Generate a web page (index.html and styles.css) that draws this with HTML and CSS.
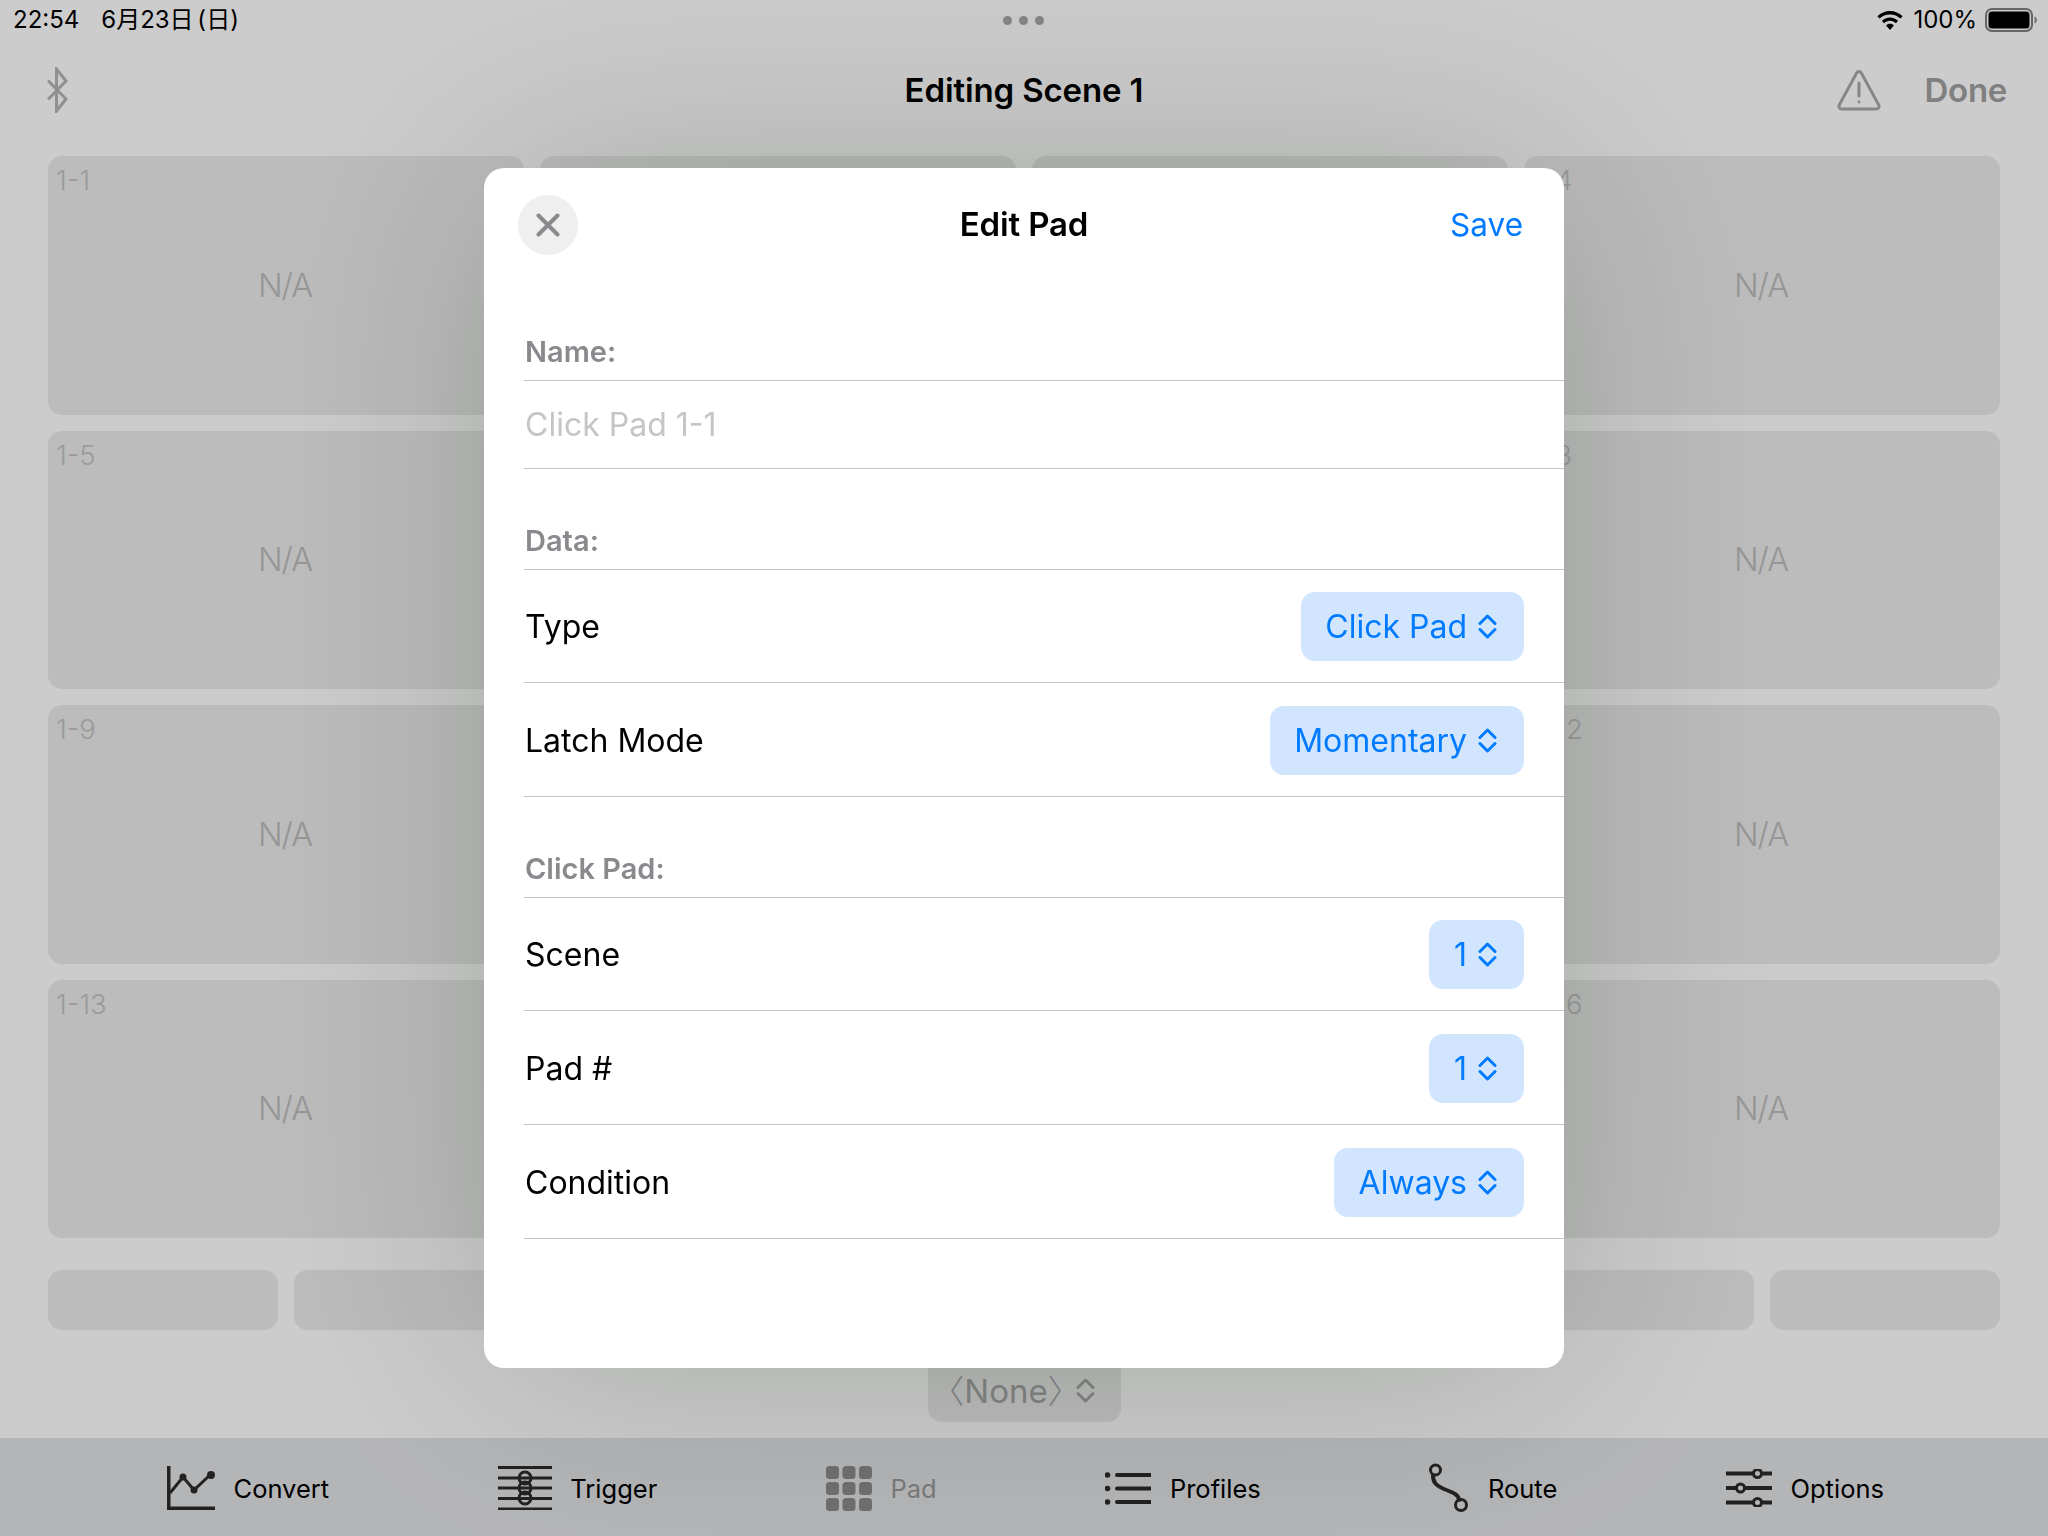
FILE: index.html
```html
<!DOCTYPE html>
<html lang="en">
<head>
<meta charset="utf-8">
<title>Editing Scene 1</title>
<link rel="stylesheet" href="styles.css">
</head>
<body>
<div class="app">
  <div class="status">
    <div class="status-left"><span>22:54</span><span class="date">6月23日 (日)</span></div>
    <div class="dots"><i></i><i></i><i></i></div>
    <div class="status-right">
      <svg class="wifi" viewBox="0 0 28 20"><path d="M14 4.200c3.900 0 7.400 1.500 10 4l2-2.200C22.800 2.900 18.600 1 14 1S5.200 2.900 2 6l2 2.200c2.600-2.500 6.100-4 10-4z"/><path d="M14 10.200c2.200 0 4.200.9 5.700 2.300l2-2.200C19.700 8.300 17 7.100 14 7.100s-5.700 1.200-7.700 3.200l2 2.200c1.500-1.400 3.500-2.300 5.700-2.300z"/><path d="M14 13.200c-1.500 0-2.800.6-3.700 1.500L14 19l3.700-4.300c-.9-.9-2.200-1.500-3.700-1.500z"/></svg>
      <span>100%</span>
      <svg class="battery" viewBox="0 0 52 24"><rect x="1" y="1" width="46" height="22" rx="6" class="batt-shell"/><rect x="3.500" y="3.500" width="41" height="17" rx="3.500"/><path class="batt-cap" d="M49.500 8.500c1.500.5 2.500 2 2.500 3.500s-1 3-2.500 3.500z"/></svg>
    </div>
  </div>

  <div class="nav">
    <div class="nav-left">
      <svg class="bt" viewBox="0 0 22 46"><path d="M2 13.500 20 32 10.500 44V2L20 14 2 32.500"/></svg>
    </div>
    <div class="nav-title">Editing Scene 1</div>
    <div class="nav-right">
      <svg class="warn" viewBox="0 0 44 42"><path d="M22 2.500c1 0 1.800.5 2.300 1.400l17.400 32c1 1.900-.2 4.100-2.300 4.100H4.600c-2.100 0-3.300-2.200-2.300-4.100l17.400-32c.5-.9 1.300-1.400 2.300-1.400z"/><path d="M22 14v13"/><circle cx="22" cy="33" r="1.400"/></svg>
      <span class="done">Done</span>
    </div>
  </div>

  <div class="pads">
    <div class="pad"><span class="pad-id">1-1</span><span class="na">N/A</span></div>
    <div class="pad"></div>
    <div class="pad"></div>
    <div class="pad"><span class="pad-id">1-4</span><span class="na">N/A</span></div>
    <div class="pad"><span class="pad-id">1-5</span><span class="na">N/A</span></div>
    <div class="pad"></div>
    <div class="pad"></div>
    <div class="pad"><span class="pad-id">1-8</span><span class="na">N/A</span></div>
    <div class="pad"><span class="pad-id">1-9</span><span class="na">N/A</span></div>
    <div class="pad"></div>
    <div class="pad"></div>
    <div class="pad"><span class="pad-id">1-12</span><span class="na">N/A</span></div>
    <div class="pad"><span class="pad-id">1-13</span><span class="na">N/A</span></div>
    <div class="pad"></div>
    <div class="pad"></div>
    <div class="pad"><span class="pad-id">1-16</span><span class="na">N/A</span></div>
  </div>

  <div class="softkeys">
    <div class="softkey"></div><div class="softkey"></div><div class="softkey"></div><div class="softkey"></div>
    <div class="softkey"></div><div class="softkey"></div><div class="softkey"></div><div class="softkey"></div>
  </div>

  <div class="selector-row">
    <div class="selector">
      <span class="sel-text"><span class="bracket bracket-open">〈</span>None<span class="bracket bracket-close">〉</span></span>
      <svg class="chev" viewBox="0 0 19 25"><path d="M2 9.500 9.500 2 17 9.500M2 15.500 9.500 23 17 15.500"/></svg>
    </div>
  </div>

  <div class="tabbar">
    <div class="tab">
      <svg class="ico" width="48" height="44" viewBox="0 0 48 44"><path class="th" d="M1.500 0v42.500H47"/><path class="tn" d="M3 27 16 11 27 24 44 8"/><circle cx="16" cy="11" r="3.500"/><circle cx="27" cy="24" r="3.500"/><circle cx="44" cy="9" r="4"/></svg>
      <span>Convert</span>
    </div>
    <div class="tab">
      <svg class="ico" width="54" height="44" viewBox="0 0 54 44"><path class="tn" d="M0 1.500h54M0 12h54M0 22h54M0 32.500h54M0 43h54"/><circle class="ring" cx="27" cy="12" r="6"/><circle class="ring" cx="27" cy="22" r="6"/><circle class="ring" cx="27" cy="32" r="6"/></svg>
      <span>Trigger</span>
    </div>
    <div class="tab tab-off">
      <svg class="ico" width="46" height="45" viewBox="0 0 46 45"><rect x="0" y="0" width="13" height="13" rx="3.500"/><rect x="16.500" y="0" width="13" height="13" rx="3.500"/><rect x="33" y="0" width="13" height="13" rx="3.500"/><rect x="0" y="16" width="13" height="13" rx="3.500"/><rect x="16.500" y="16" width="13" height="13" rx="3.500"/><rect x="33" y="16" width="13" height="13" rx="3.500"/><rect x="0" y="32" width="13" height="13" rx="3.500"/><rect x="16.500" y="32" width="13" height="13" rx="3.500"/><rect x="33" y="32" width="13" height="13" rx="3.500"/></svg>
      <span>Pad</span>
    </div>
    <div class="tab">
      <svg class="ico" width="46" height="33" viewBox="0 0 46 33"><circle cx="2.500" cy="3" r="2.800"/><circle cx="2.500" cy="16.500" r="2.800"/><circle cx="2.500" cy="30" r="2.800"/><path class="th" d="M12 3h34M12 16.500h34M12 30h34"/></svg>
      <span>Profiles</span>
    </div>
    <div class="tab">
      <svg class="ico" width="40" height="50" viewBox="0 0 40 50"><circle class="ring" cx="6.500" cy="7" r="5"/><circle class="ring" cx="32" cy="42" r="5.500"/><path class="th" d="M4 12.500c0 7 3 10 11 13.500 10 4 15 6 15 11"/></svg>
      <span>Route</span>
    </div>
    <div class="tab">
      <svg class="ico" width="46" height="38" viewBox="0 0 46 38"><path class="th" d="M0 4.500h27M36 4.500h10M0 19h10M19 19h27M0 33.500h27M36 33.500h10"/><circle class="ring" cx="31.500" cy="4.500" r="4"/><circle class="ring" cx="14.500" cy="19" r="4"/><circle class="ring" cx="31.500" cy="33.500" r="4"/></svg>
      <span>Options</span>
    </div>
  </div>
</div>

<div class="scrim">
  <div class="modal">
    <div class="modal-head">
      <div class="close">
        <svg class="close-x" viewBox="0 0 24 24"><path d="M2.500 2.500l19 19M21.500 2.500l-19 19"/></svg>
      </div>
      <div class="modal-title">Edit Pad</div>
      <div class="save">Save</div>
    </div>
    <div class="form">
      <div class="sec-head sec-first">Name:</div>
      <div class="field">Click Pad 1-1</div>
      <div class="sec-head">Data:</div>
      <div class="row row-first">
        <span>Type</span>
        <div class="pick"><span>Click Pad</span><svg class="chev" viewBox="0 0 19 25"><path d="M2 9.500 9.500 2 17 9.500M2 15.500 9.500 23 17 15.500"/></svg></div>
      </div>
      <div class="row">
        <span>Latch Mode</span>
        <div class="pick"><span>Momentary</span><svg class="chev" viewBox="0 0 19 25"><path d="M2 9.500 9.500 2 17 9.500M2 15.500 9.500 23 17 15.500"/></svg></div>
      </div>
      <div class="sec-head">Click Pad:</div>
      <div class="row row-first">
        <span>Scene</span>
        <div class="pick"><span>1</span><svg class="chev" viewBox="0 0 19 25"><path d="M2 9.500 9.500 2 17 9.500M2 15.500 9.500 23 17 15.500"/></svg></div>
      </div>
      <div class="row">
        <span>Pad #</span>
        <div class="pick"><span>1</span><svg class="chev" viewBox="0 0 19 25"><path d="M2 9.500 9.500 2 17 9.500M2 15.500 9.500 23 17 15.500"/></svg></div>
      </div>
      <div class="row">
        <span>Condition</span>
        <div class="pick"><span>Always</span><svg class="chev" viewBox="0 0 19 25"><path d="M2 9.500 9.500 2 17 9.500M2 15.500 9.500 23 17 15.500"/></svg></div>
      </div>
    </div>
  </div>
</div>
</body>
</html>
```

FILE: styles.css
```css
* { box-sizing: border-box; }
html, body { margin: 0; height: 100%; }
body {
  width: 2048px;
  height: 1536px;
  overflow: hidden;
  background: #fff;
  color: #000;
  font-family: Inter, "Noto Sans CJK JP", "Noto Sans", sans-serif;
}
.app { width: 2048px; height: 1536px; display: flex; flex-direction: column; }

.status {
  height: 40px;
  padding: 0 12px;
  display: grid;
  grid-template-columns: 1fr auto 1fr;
  align-items: center;
  font-size: 24px;
  line-height: 28px;
}
.status-left { display: flex; align-items: baseline; gap: 22px; padding-left: 1px; }
.date { word-spacing: -3px; font-size: 24px; }
.status-right { display: flex; justify-content: flex-end; align-items: center; gap: 8px; margin-right: -1px; }
.dots { display: flex; gap: 7px; margin-left: -2px; }
.dots i { width: 9px; height: 9px; border-radius: 50%; background: #a8a8a8; }
.wifi { width: 30px; height: 21px; fill: #000; }
.battery { width: 52px; height: 24px; fill: #000; }
.batt-shell { fill: none; stroke: #7f7f7f; stroke-width: 2; }
.batt-cap { fill: #8f8f8f; }

.nav {
  height: 100px;
  padding: 0 41px;
  display: grid;
  grid-template-columns: 1fr auto 1fr;
  align-items: center;
}
.nav-left { display: flex; align-items: center; padding-left: 5px; }
.bt { width: 22px; height: 46px; fill: none; stroke: #b4b4b4; stroke-width: 3; stroke-linejoin: miter; }
.nav-title { font-size: 33px; font-weight: 600; letter-spacing: -0.13px; }
.nav-right { display: flex; justify-content: flex-end; align-items: center; gap: 44px; }
.warn { width: 44px; height: 42px; fill: none; stroke: #a8a8a8; stroke-width: 3; stroke-linecap: round; }
.warn circle { fill: #a8a8a8; stroke: none; }
.done { font-size: 33px; font-weight: 600; color: #a0a0a0; letter-spacing: -0.3px; }

.pads {
  height: 1082px;
  margin-top: 16px;
  padding: 0 48px;
  display: grid;
  grid-template-columns: repeat(4, 1fr);
  grid-template-rows: repeat(4, 1fr);
  gap: 16px;
}
.pad {
  position: relative;
  background: #ebebeb;
  border-radius: 14px;
  display: flex;
  align-items: center;
  justify-content: center;
  font-size: 32.500px;
  font-weight: 300;
  letter-spacing: -1px;
  color: #bcbcbc;
}
.na { padding-right: 2px; }
.pad-id {
  position: absolute;
  left: 8px;
  top: 7px;
  font-size: 27.500px;
  font-weight: 300;
  letter-spacing: 0;
  color: #c2c2c2;
}

.softkeys {
  margin-top: 32px;
  padding: 0 48px;
  display: grid;
  grid-template-columns: repeat(8, 1fr);
  gap: 16px;
}
.softkey { height: 60px; background: #ebebeb; border-radius: 14px; }

.selector-row { margin-top: 23px; display: flex; justify-content: center; }
.selector {
  width: 193px;
  height: 69px;
  padding: 6px 5px 0 0;
  background: #ebebeb;
  border-radius: 14px;
  display: flex;
  align-items: center;
  justify-content: center;
  gap: 15px;
  font-size: 33px;
  color: #a6a6a6;
}
.bracket { font-family: "Noto Sans CJK JP", sans-serif; font-weight: 300; line-height: 0; }
.bracket-open { margin-left: -17px; }
.bracket-close { margin-right: -20px; }
.selector .chev { stroke: #a6a6a6; }

.tabbar {
  margin-top: 16px;
  flex: 1;
  background: #e2e3e5;
  display: flex;
  justify-content: space-between;
  align-items: center;
  padding: 2px 164px 0 167px;
  font-size: 25.500px;
}
.tab { display: flex; align-items: center; gap: 18.500px; }
.ico { display: block; fill: #2b2b2b; }
.th, .tn, .ring { fill: none; stroke: #2b2b2b; }
.th { stroke-width: 4; stroke-linecap: round; }
.tn { stroke-width: 3; }
.ring { stroke-width: 3; }
.tab-off { color: #999; }
.tab-off .ico { fill: #8c8c8c; }

.scrim {
  position: fixed;
  inset: 0;
  background: rgba(0, 0, 0, 0.2);
  display: flex;
  align-items: center;
  justify-content: center;
}
.modal {
  width: 1080px;
  height: 1200px;
  background: #fff;
  border-radius: 20px;
  box-shadow: 0 0 240px rgba(0, 24, 0, 0.2);
}
.modal-head {
  padding: 26px 41px 0;
  height: 87px;
  display: grid;
  grid-template-columns: 1fr auto 1fr;
  align-items: center;
}
.close {
  width: 60px;
  height: 60px;
  margin-left: -7px;
  margin-top: 1px;
  border-radius: 50%;
  background: #efefef;
  display: flex;
  align-items: center;
  justify-content: center;
}
.close-x { width: 24px; height: 24px; fill: none; stroke: #8a8a8e; stroke-width: 4; stroke-linecap: round; }
.modal-title { font-size: 33px; font-weight: 600; letter-spacing: -0.13px; margin-top: -1px; }
.save { justify-self: end; font-size: 31.500px; color: #007aff; margin-top: -1px; }

.form { padding-left: 40px; font-size: 32px; }
.sec-head {
  margin-top: 55px;
  height: 46px;
  line-height: 34px;
  padding: 0 0 11px 1px;
  border-bottom: 1px solid #c6c6c8;
  font-size: 29px;
  font-weight: 600;
  color: #8a8a8e;
}
.sec-first { margin-top: 80px; }
.field {
  height: 88px;
  padding: 0 0 0 1px;
  display: flex;
  align-items: center;
  color: #c5c5c7;
  border-bottom: 1px solid #c6c6c8;
}
.row {
  height: 114px;
  padding: 2px 40px 0 1px;
  display: flex;
  align-items: center;
  justify-content: space-between;
  border-bottom: 1px solid #c6c6c8;
}
.row-first { height: 113px; padding-top: 1px; }
.pick {
  height: 69px;
  padding: 0 27px 0 24.500px;
  border-radius: 14px;
  background: #d1e6fe;
  color: #007aff;
  display: flex;
  align-items: center;
  gap: 11px;
}
.chev { width: 19px; height: 25px; fill: none; stroke: #007aff; stroke-width: 3; stroke-linecap: round; stroke-linejoin: round; }
```
